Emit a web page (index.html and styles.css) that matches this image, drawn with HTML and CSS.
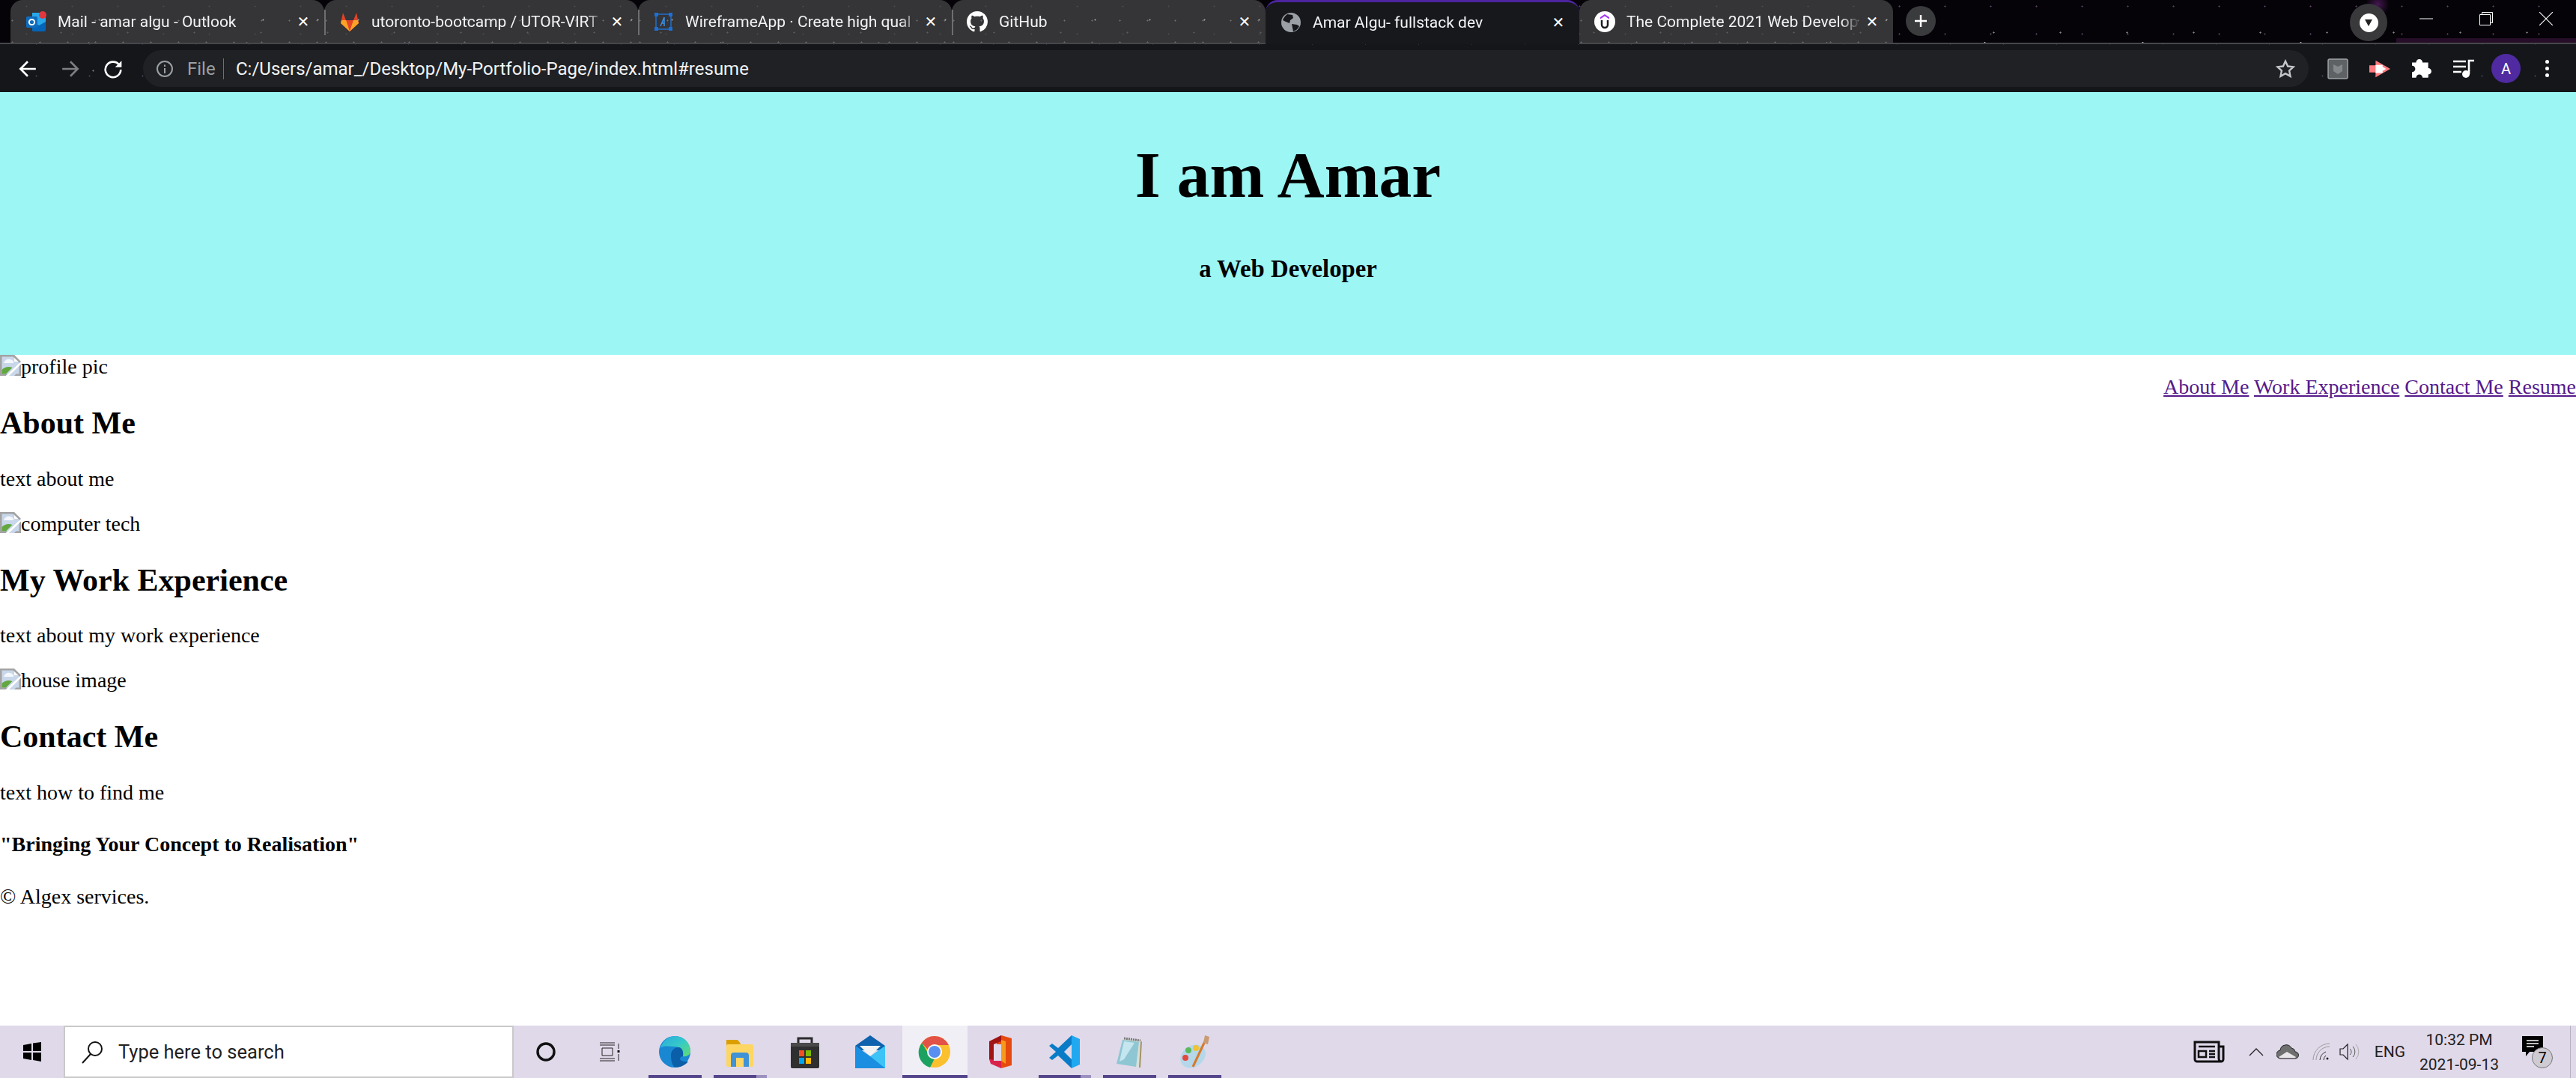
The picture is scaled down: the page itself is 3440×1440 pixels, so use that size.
FILE: index.html
```html
<!DOCTYPE html>
<html lang="en">
<head>
    <meta charset="UTF-8">
    <title>Amar Algu- fullstack dev</title>
    <link rel="stylesheet" href="styles.css">
</head>
<body>
    <svg class="defs">
        <symbol id="broken-img" viewBox="0 0 28 28">
            <path fill="#c9d7ea" d="M0 0h19l9 9v19H0z"/>
            <path fill="#fff" d="M19 0v9h9z"/>
            <path fill="#a3a3a3" d="M0 0h19v2.500H2.500V25.500H10L7.500 28H0zM19 0l9 9v19h-9l2.500-2.500h4V10l-8-7.500z"/>
            <path fill="#f4f7fc" d="M5 11c1-4 5-6 8-5 3 0 6 3 5 5H5z"/>
            <path fill="#62a83f" d="M2.500 25.500V20c4-4 9-5 14-3l-8.500 8.500z"/>
            <path fill="#fff" d="M8 28L28 9v3.500L12 28z"/>
        </symbol>
    </svg>
    <div class="window">
        <!-- browser frame -->
        <div class="browser">
            <div class="tabstrip">
                <div class="tab">
                    <svg class="favicon" viewBox="0 0 28 28"><path fill="#28a8ea" d="M9 2h14l4 4v18l-4 2H9z"/><path fill="#0364b8" d="M9 14l9 5 9-5v11a2 2 0 0 1-2 2H11a2 2 0 0 1-2-2z"/><rect x="1" y="7" width="15" height="15" rx="1.500" fill="#0f6cbd"/><circle cx="8.500" cy="14.500" r="3.600" fill="none" stroke="#fff" stroke-width="2"/><circle cx="23" cy="5" r="5" fill="#e0383e"/></svg>
                    <span class="tab-title">Mail - amar algu - Outlook</span>
                    <span class="tab-close">✕</span>
                </div>
                <div class="tab tab-sep">
                    <svg class="favicon" viewBox="0 0 28 28"><path fill="#e24329" d="M14 27L2 16 5 2l4 10h10l4-10 3 14z"/><path fill="#fc6d26" d="M14 27L9 12H3zM14 27l5-15h6z"/><path fill="#fca326" d="M2 16l1-4h6l5 15zM26 16l-1-4h-6l-5 15z"/></svg>
                    <span class="tab-title">utoronto-bootcamp / UTOR-VIRT</span>
                    <span class="tab-close">✕</span>
                </div>
                <div class="tab tab-sep">
                    <svg class="favicon" viewBox="0 0 28 28"><rect x="4" y="4" width="20" height="20" fill="none" stroke="#1f6fd0" stroke-width="1.500"/><g fill="#1f6fd0"><rect x="2" y="2" width="5" height="5"/><rect x="21" y="2" width="5" height="5"/><rect x="2" y="21" width="5" height="5"/><rect x="21" y="21" width="5" height="5"/></g><path fill="none" stroke="#3b8ee8" stroke-width="1.500" d="M10 20l5-12v12M11.500 16h3.500"/></svg>
                    <span class="tab-title">WireframeApp · Create high qual</span>
                    <span class="tab-close">✕</span>
                </div>
                <div class="tab tab-sep">
                    <svg class="favicon" viewBox="0 0 16 16"><path fill="#fff" d="M8 0C3.580 0 0 3.580 0 8c0 3.540 2.290 6.530 5.470 7.590.4.070.55-.17.55-.38 0-.19-.01-.82-.01-1.490-2.010.37-2.530-.49-2.690-.94-.09-.23-.48-.94-.82-1.130-.28-.15-.68-.52-.01-.53.63-.01 1.080.58 1.230.82.72 1.210 1.870.87 2.330.66.07-.52.28-.87.51-1.070-1.780-.2-3.640-.89-3.640-3.950 0-.87.31-1.590.82-2.150-.08-.2-.36-1.020.08-2.120 0 0 .67-.21 2.200.82.64-.18 1.320-.27 2-.27s1.360.09 2 .27c1.530-1.040 2.200-.82 2.200-.82.44 1.100.16 1.920.08 2.120.51.560.82 1.270.82 2.150 0 3.070-1.870 3.750-3.650 3.950.29.25.54.73.54 1.480 0 1.070-.01 1.930-.01 2.200 0 .21.15.46.55.38A8.010 8.010 0 0 0 16 8c0-4.420-3.580-8-8-8z"/></svg>
                    <span class="tab-title">GitHub</span>
                    <span class="tab-close">✕</span>
                </div>
                <div class="tab tab-active">
                    <svg class="favicon" viewBox="0 0 28 28"><circle cx="14" cy="14" r="13" fill="#9aa0a6"/><path fill="#17181c" d="M9 3l7 1 1 4-4 3-1 4-5-2-4-2C4 8 6 5 9 3zM15 16l7 1 3 2c-2 4-5 6-8 7l-1-5z"/></svg>
                    <span class="tab-title">Amar Algu- fullstack dev</span>
                    <span class="tab-close">✕</span>
                </div>
                <div class="tab">
                    <svg class="favicon" viewBox="0 0 28 28"><circle cx="14" cy="14" r="14" fill="#fff"/><path fill="#a435f0" d="M14 4l6 4v2.500l-6-4-6 4V8z"/><path fill="none" stroke="#1c1d1f" stroke-width="2.500" d="M10 12v6a4 4 0 0 0 8 0v-6"/></svg>
                    <span class="tab-title">The Complete 2021 Web Develop</span>
                    <span class="tab-close">✕</span>
                </div>
                <div class="newtab">
                    <svg viewBox="0 0 20 20" width="20" height="20"><path d="M10 2v16M2 10h16" stroke="#fff" stroke-width="2.400"/></svg>
                </div>
                <div class="tabstrip-space"></div>
                <div class="tabsearch"><span class="tabsearch-dot"><span class="tabsearch-arrow"></span></span></div>
                <div class="winbtn">
                    <svg viewBox="0 0 18 18" width="18" height="18"><path d="M0 9h18" stroke="#fff" stroke-width="1"/></svg>
                </div>
                <div class="winbtn">
                    <svg viewBox="0 0 18 18" width="18" height="18"><path fill="none" stroke="#fff" d="M.5 3.500h14v14H.5zM3.500 3.500v-3h14v14h-3"/></svg>
                </div>
                <div class="winbtn">
                    <svg viewBox="0 0 18 18" width="18" height="18"><path d="M0 0l18 18M18 0L0 18" stroke="#fff" stroke-width="1.100"/></svg>
                </div>
            </div>

            <div class="toolbar">
                <svg class="tool-nav" viewBox="0 0 24 24"><path fill="none" stroke="#fff" stroke-width="2.400" d="M22 12H4M12 3l-9 9 9 9"/></svg>
                <svg class="tool-nav" viewBox="0 0 24 24"><path fill="none" stroke="#7c7f83" stroke-width="2.400" d="M2 12h18M12 3l9 9-9 9"/></svg>
                <svg class="tool-nav" viewBox="0 0 24 24"><path fill="none" stroke="#fff" stroke-width="2.400" d="M19.500 7A9.500 9.500 0 1 0 21.500 13"/><path fill="#fff" d="M22.500 2v8h-8z"/></svg>
                <div class="omnibox">
                    <svg class="omni-info" viewBox="0 0 24 24"><circle cx="12" cy="12" r="10" fill="none" stroke="#9aa0a6" stroke-width="2"/><path d="M12 11v7M12 6.500v2.500" stroke="#9aa0a6" stroke-width="2"/></svg>
                    <span class="omni-file">File</span>
                    <span class="omni-sep"></span>
                    <span class="omni-url">C:/Users/amar_/Desktop/My-Portfolio-Page/index.html#resume</span>
                    <svg class="omni-star" viewBox="0 0 24 24"><path fill="none" stroke="#c4c7c9" stroke-width="2.200" d="M12 2.500l2.900 6.300 6.800.8-5 4.700 1.300 6.800-6-3.400-6 3.400 1.300-6.800-5-4.700 6.800-.8z"/></svg>
                </div>
                <div class="tool-icons">
                    <svg class="tool-icon" viewBox="0 0 28 28"><rect x="1" y="1" width="26" height="26" rx="2" fill="#5f6265" stroke="#a0a3a6" stroke-width="1.500"/><path fill="#85888b" d="M8 8l6 3 6-3v9l-6 4-6-4z"/></svg>
                    <svg class="tool-icon" viewBox="0 0 30 24"><path fill="#ff7b80" d="M0 7h9V0l21 12-21 12v-7H0z"/><path fill="#fff" d="M9 6.500h10V18H9zM19 9l5 3-5 3z"/></svg>
                    <svg class="tool-icon" viewBox="0 0 26 26"><path fill="#fff" d="M10 1a4 4 0 0 1 4 4h7v7a4 4 0 0 1 0 8v4h-7a4 4 0 0 0-8 0H1v-7a4 4 0 0 0 0-8V5h5a4 4 0 0 1 4-4z"/></svg>
                    <svg class="tool-icon" viewBox="0 0 28 26"><path d="M0 3h17M0 10h17M0 17h11" stroke="#fff" stroke-width="2.400"/><path fill="none" stroke="#fff" stroke-width="2.600" d="M21 20V2h7"/><circle cx="17" cy="20" r="5" fill="#fff"/></svg>
                    <span class="avatar">A</span>
                    <span class="menu-dots"><i></i><i></i><i></i></span>
                </div>
            </div>
        </div>

        <!-- portfolio page -->
        <div class="page">
            <header class="hero">
                <h1>I am Amar</h1>
                <h3>a Web Developer</h3>
            </header>

            <nav class="site-nav">
                <a href="#about">About Me</a>
                <a href="#work">Work Experience</a>
                <a href="#contact">Contact Me</a>
                <a href="#resume">Resume</a>
            </nav>

            <section id="about">
                <div class="broken">
                    <svg class="broken-icon"><use href="#broken-img"/></svg>profile pic
                </div>
                <h2>About Me</h2>
                <p>text about me</p>
            </section>
            <section id="work">
                <div class="broken">
                    <svg class="broken-icon"><use href="#broken-img"/></svg>computer tech
                </div>
                <h2>My Work Experience</h2>
                <p>text about my work experience</p>
            </section>
            <section id="contact">
                <div class="broken">
                    <svg class="broken-icon"><use href="#broken-img"/></svg>house image
                </div>
                <h2>Contact Me</h2>
                <p>text how to find me</p>
            </section>
            <footer>
                <h4>"Bringing Your Concept to Realisation"</h4>
                <p>© Algex services.</p>
            </footer>
        </div>

        <!-- windows taskbar -->
        <div class="taskbar">
            <div class="start">
                <svg viewBox="0 0 24 26" width="24" height="26"><path fill="#000" d="M0 4l11-2v10H0zM13 1.500L24 0v12H13zM0 14h11v10L0 22zM13 14h11v12l-11-2z"/></svg>
            </div>
            <div class="search">
                <svg viewBox="0 0 32 32" width="32" height="32"><circle cx="20" cy="12" r="9" fill="none" stroke="#111" stroke-width="2"/><path d="M14 19L3 31" stroke="#111" stroke-width="2"/></svg>
                <span>Type here to search</span>
            </div>
            <div class="task-btn">
                <svg viewBox="0 0 30 30" width="30" height="30"><circle cx="15" cy="15" r="11" fill="none" stroke="#111" stroke-width="3.400"/></svg>
            </div>
            <div class="task-btn">
                <svg viewBox="0 0 30 30" width="30" height="30"><path fill="none" stroke="#222" d="M2 3h20M2 6h20M5 10h14v10H5zM2 24h20M2 27h20M27 4v7M27 18v9"/><rect x="25.500" y="13" width="3" height="3" fill="#111"/></svg>
            </div>

            <div class="task-apps">
                <div class="app app-on">
                    <svg viewBox="0 0 44 44" width="44" height="44"><defs><linearGradient id="edge-top" x1="0" y1="0" x2="1" y2="1"><stop offset="0" stop-color="#2aa9e0"/><stop offset=".5" stop-color="#35c9c9"/><stop offset="1" stop-color="#62dd70"/></linearGradient></defs><circle cx="22" cy="22" r="21" fill="#1a87d2"/><path fill="url(#edge-top)" d="M3 17C6 7 14 1 23 1c11 0 20 9 20 20 0 5-5 8-10 7 1-8-4-13-11-13-7 0-15-2-19 2z"/><path fill="#0b5ea8" d="M17 27c0-7 5-11 10-11 5 0 7 6 6 12-6 1-6 8 7 7-5 6-13 9-19 7-3-4-4-9-4-15z"/></svg>
                </div>
                <div class="app app-on app-multi">
                    <svg viewBox="0 0 44 44" width="44" height="44"><path fill="#dba000" d="M4 6h15l4 5-4 5H4z"/><rect x="4" y="12" width="36" height="30" rx="2" fill="#fdd663"/><path fill="#3f93d6" d="M10 42V27a4 4 0 0 1 4-4h16a4 4 0 0 1 4 4v15h-7V30H17v12z"/></svg>
                </div>
                <div class="app">
                    <svg viewBox="0 0 44 44" width="44" height="44"><path fill="none" stroke="#2b2b2b" stroke-width="3" d="M13 12V4h18v8"/><rect x="3" y="10" width="38" height="34" rx="2" fill="#2f2f2f"/><rect x="3" y="10" width="38" height="5" fill="#4a4a4a"/><rect x="14" y="20" width="7" height="8" fill="#f25022"/><rect x="23" y="20" width="7" height="8" fill="#7fba00"/><rect x="14" y="30" width="7" height="8" fill="#00a4ef"/><rect x="23" y="30" width="7" height="8" fill="#ffb900"/></svg>
                </div>
                <div class="app">
                    <svg viewBox="0 0 44 44" width="44" height="44"><path fill="#0f62ad" d="M2 14L22 0l20 14v6H2z"/><path fill="#f3f3f3" d="M8 14h28L22 28z"/><path fill="#3dc3f5" d="M2 14l20 14 20-14v30H2z"/><path fill="#1a8ee0" d="M2 14l20 14 20 16H2z"/></svg>
                </div>
                <div class="app app-on app-active">
                    <svg viewBox="0 0 44 44" width="44" height="44"><circle cx="22" cy="22" r="21" fill="#fbc02d"/><path fill="#e35247" d="M22 1a21 21 0 0 1 19 12H22a9 9 0 0 0-9 6L5 10A21 21 0 0 1 22 1z"/><path fill="#1ba261" d="M5 10l9 15a9 9 0 0 0 8 6l-6 12A21 21 0 0 1 5 10z"/><circle cx="22" cy="22" r="10" fill="#fff"/><circle cx="22" cy="22" r="8" fill="#5a8ff2"/></svg>
                </div>
                <div class="app">
                    <svg viewBox="0 0 44 44" width="44" height="44"><path fill="#e64a0f" d="M24 0l14 4v36l-14 4 -6-6V6z"/><path fill="#a01414" d="M24 0L8 8v24l6 2V12l10-4z"/><path fill="#d9224a" d="M8 32l16 2v10L10 38z"/><path fill="#e0d9ea" d="M14 12h10v22H14z"/><path fill="#f59a1b" d="M24 6l6 2v30l-6-4z"/></svg>
                </div>
                <div class="app app-on app-multi">
                    <svg viewBox="0 0 44 44" width="44" height="44"><path fill="#20a8f0" d="M31 0l11 5v34l-11 5z"/><path fill="#0a7cc7" d="M31 0v44L13 27l-8 6-4-3 9-8-9-8 4-3 8 6zM31 12l-10 10 10 10z"/><path fill="#e0d9ea" d="M31 13l-10 9 10 9z" opacity=".25"/></svg>
                </div>
                <div class="app app-on">
                    <svg viewBox="0 0 44 44" width="44" height="44"><path fill="#d8dfd8" d="M14 4l24 3-2 36-26-4z"/><path fill="#8fc6d4" d="M12 6l22 3-4 33L4 38z"/><path fill="#c5e6ef" d="M14 8l14 2-14 22-6 3z"/><path d="M14 4l22 3" stroke="#777" stroke-width="3" stroke-dasharray="2 1"/><path fill="#a39265" d="M36 9l2-1-2 35-2 0z"/></svg>
                </div>
                <div class="app app-on">
                    <svg viewBox="0 0 44 44" width="44" height="44"><ellipse cx="20" cy="28" rx="18" ry="14" fill="#b5d7ea" transform="rotate(-35 20 28)"/><circle cx="10" cy="30" r="4" fill="#e2483d"/><circle cx="14" cy="20" r="4" fill="#5cb85c"/><circle cx="24" cy="17" r="4" fill="#f1c232"/><path d="M20 42L36 8" stroke="#d8792a" stroke-width="3"/><path fill="#c99b73" d="M34 10l2-10 6 2-2 10z"/></svg>
                </div>
            </div>

            <div class="tray">
                <svg class="tray-news" viewBox="0 0 42 30" width="42" height="30"><path fill="none" stroke="#111" stroke-width="3" d="M2 2h32v22a4 4 0 0 0 4 4H5a3 3 0 0 1-3-3zM34 8h6v17a3 3 0 0 1-3 3"/><path fill="none" stroke="#111" stroke-width="2.500" d="M7 8h22M7 14h10v8H7zM21 14h8M21 18h8M21 22h8"/></svg>
                <svg class="tray-up" viewBox="0 0 20 12" width="20" height="12"><path fill="none" stroke="#222" stroke-width="1.300" d="M1 11l9-9 9 9"/></svg>
                <svg class="tray-cloud" viewBox="0 0 30 20" width="30" height="20"><path fill="#6f6f6f" d="M6 19a5.500 5.500 0 0 1-1-11 8 8 0 0 1 15-3 6 6 0 0 1 5 5 4.500 4.500 0 0 1 0 9z"/><path fill="#e8e6e8" d="M3 17l11-7 12 7a3 3 0 0 1-2 1.500H6a4 4 0 0 1-3-1.500z"/><path fill="none" stroke="#222" d="M6 19a5.500 5.500 0 0 1-1-11 8 8 0 0 1 15-3 6 6 0 0 1 5 5 4.500 4.500 0 0 1 0 9z"/></svg>
                <svg class="tray-wifi" viewBox="0 0 24 24" width="24" height="24"><g fill="none" stroke="#999"><path d="M1 23A22 22 0 0 1 23 1M5 23A18 18 0 0 1 23 5"/><path stroke="#333" d="M10 23A13 13 0 0 1 18 12M15 23a8 8 0 0 1 3-6"/></g><circle cx="20" cy="21" r="1.500" fill="#222"/></svg>
                <svg class="tray-vol" viewBox="0 0 28 24" width="28" height="24"><path fill="none" stroke="#222" stroke-width="1.200" d="M1 8h4l6-6v20l-6-6H1z"/><path fill="none" stroke="#555" d="M14 8a5 5 0 0 1 0 8M18 5a10 10 0 0 1 0 14"/><path fill="none" stroke="#aaa" d="M22 2a15 15 0 0 1 0 20"/></svg>
                <span class="tray-lang">ENG</span>
                <div class="tray-clock">
                    <span>10:32 PM</span>
                    <span>2021-09-13</span>
                </div>
                <div class="tray-notify">
                    <svg viewBox="0 0 28 28" width="28" height="28"><path fill="#000" d="M0 0h28v21H10l-5 6v-6H0z"/><path d="M6 6h16M6 10h16M6 14h10" stroke="#fff" stroke-width="1.500"/></svg>
                    <span class="notify-badge">7</span>
                </div>
            </div>
        </div>
    </div>
</body>
</html>
```

FILE: styles.css
```css
html {
    font-size: 28px;
}

body {
    margin: 0;
    background: #fff;
    color: #000;
    font-family: "Liberation Serif", serif;
}

.window {
    width: 3440px;
    height: 1440px;
    display: flex;
    flex-direction: column;
    overflow: hidden;
}

.defs {
    display: none;
}

/* browser frame */
.browser {
    height: 123px;
    flex-shrink: 0;
    color: #fff;
    font-family: "Roboto", "Liberation Sans", sans-serif;
    background-color: #050308;
    background-image:
        radial-gradient(circle, #d8d8e8 0 1px, transparent 1.6px),
        radial-gradient(circle, #6f7fd0 0 1px, transparent 1.6px),
        radial-gradient(circle, #8a8a8a 0 .8px, transparent 1.4px),
        radial-gradient(circle, #55405f 0 .8px, transparent 1.4px);
    background-size: 211px 97px, 157px 71px, 89px 53px, 61px 37px;
    background-position: 13px 9px, 71px 31px, 37px 17px, 5px 27px;
}

.tabstrip {
    height: 59px;
    display: flex;
    align-items: stretch;
    padding-left: 14px;
    box-sizing: border-box;
    border-bottom: 2px solid #46474a;
    background:
        radial-gradient(circle, rgba(120, 40, 140, .55), transparent 16px) no-repeat 3175px 6px / 32px 32px,
        linear-gradient(#260d28, #260d28) no-repeat right 0 bottom 0 / 240px 6px;
    background-position: 3159px -10px, right bottom;
}

.tab {
    width: 419px;
    flex-shrink: 0;
    box-sizing: border-box;
    padding: 0 19px 0 20px;
    display: flex;
    align-items: center;
    position: relative;
    border-radius: 16px 16px 0 0;
    background-color: rgba(72, 72, 72, .72);
    background-image:
        radial-gradient(circle, #9a9a9a 0 .8px, transparent 1.4px),
        radial-gradient(circle, #6a6a6a 0 .8px, transparent 1.4px);
    background-size: 73px 41px, 37px 29px;
    background-position: 9px 6px, 21px 13px;
    font-size: 21px;
}

.tab-sep::before {
    content: "";
    position: absolute;
    left: 0;
    top: 13px;
    height: 34px;
    width: 2px;
    background: #6d6e70;
}

.tab-active {
    background: #17181c;
    border-top: 3px solid #4d24a0;
    border-bottom: 2px solid #17181c;
    margin-bottom: -2px;
}

.favicon {
    width: 28px;
    height: 28px;
    flex-shrink: 0;
}

.tab-title {
    margin-left: 15px;
    width: 312px;
    white-space: nowrap;
    overflow: hidden;
    color: #f1f3f4;
    -webkit-mask-image: linear-gradient(90deg, #000 92%, transparent 100%);
    mask-image: linear-gradient(90deg, #000 92%, transparent 100%);
}

.tab-close {
    margin-left: auto;
    font-size: 20px;
    font-family: "DejaVu Sans", sans-serif;
    font-weight: bold;
    width: 18px;
    text-align: center;
}

.newtab {
    width: 40px;
    height: 40px;
    margin: 8px 0 0 17px;
    border-radius: 50%;
    background: #3a3b3d;
    display: flex;
    align-items: center;
    justify-content: center;
}

.tabstrip-space {
    flex: 1;
}

.tabsearch {
    width: 50px;
    height: 50px;
    margin: 5px 12px 0 0;
    border-radius: 50%;
    background: #39393b;
    display: flex;
    align-items: center;
    justify-content: center;
}

.tabsearch-dot {
    width: 25px;
    height: 25px;
    border-radius: 50%;
    background: #fff;
    display: flex;
    align-items: center;
    justify-content: center;
}

.tabsearch-arrow {
    border-style: solid;
    border-width: 9px 5px 0;
    border-color: #222 transparent transparent;
}

.winbtn {
    width: 80px;
    height: 50px;
    display: flex;
    align-items: center;
    justify-content: center;
}

.toolbar {
    height: 64px;
    display: flex;
    align-items: center;
    padding: 8px 0 7px 24px;
    box-sizing: border-box;
    background-color: #14161a;
    background-image:
        radial-gradient(circle, #777b80 0 .8px, transparent 1.4px),
        radial-gradient(circle, #3c4250 0 .8px, transparent 1.4px);
    background-size: 167px 61px, 71px 43px;
    background-position: 41px 5px, 13px 21px;
}

.tool-nav {
    width: 26px;
    height: 26px;
    flex-shrink: 0;
    margin-right: 31px;
}

.omnibox {
    width: 2892px;
    height: 49px;
    margin-left: -4px;
    padding-left: 17px;
    box-sizing: border-box;
    border-radius: 25px;
    background: #202124;
    display: flex;
    align-items: center;
    flex-shrink: 0;
    font-size: 24px;
}

.omni-info {
    width: 24px;
    height: 24px;
}

.omni-file {
    margin-left: 18px;
    width: 35px;
    color: #9aa0a6;
    white-space: nowrap;
}

.omni-sep {
    width: 1px;
    height: 28px;
    margin: 0 16px 0 13px;
    background: #6c6f73;
}

.omni-url {
    color: #f1f3f4;
}

.omni-star {
    width: 26px;
    height: 26px;
    margin-left: auto;
    margin-right: 18px;
}

.tool-icons {
    flex: 1;
    display: flex;
    align-items: center;
    padding-left: 25px;
}

.tool-icon {
    width: 28px;
    height: 28px;
    margin-right: 28px;
}

.avatar {
    width: 39px;
    height: 39px;
    margin-left: -5px;
    border-radius: 50%;
    background: #4f2aa0;
    font-size: 20px;
    display: flex;
    align-items: center;
    justify-content: center;
}

.menu-dots {
    margin-left: 33px;
    display: flex;
    flex-direction: column;
    gap: 4px;
}

.menu-dots i {
    width: 5px;
    height: 5px;
    border-radius: 50%;
    background: #fff;
}

/* portfolio page */
.page {
    flex: 1;
    min-height: 0;
    line-height: 32px;
}

.hero {
    height: 351px;
    box-sizing: border-box;
    padding-top: 62px;
    background: #9cf6f4;
    text-align: center;
}

.hero h1 {
    margin: 0 0 57px;
    font-size: 87.500px;
    line-height: 98px;
}

.hero h3 {
    margin: 0;
    font-size: 32.760px;
    line-height: 38px;
}

.site-nav {
    float: right;
    margin-top: 27px;
}

.site-nav a {
    color: #551a8b;
}

.broken-icon {
    width: 28px;
    height: 28px;
    vertical-align: -3px;
}

h2 {
    margin: .83em 0;
    font-size: 42px;
    line-height: 48px;
}

p {
    margin: 1em 0;
}

h4 {
    margin: 1.33em 0;
    font-size: 28px;
}

/* windows taskbar */
.taskbar {
    height: 70px;
    flex-shrink: 0;
    display: flex;
    align-items: center;
    background: #e0d9ea;
    font-family: "Roboto", "Liberation Sans", sans-serif;
    color: #222;
}

.start {
    width: 85px;
    height: 100%;
    display: flex;
    align-items: center;
    justify-content: center;
}

.search {
    width: 601px;
    height: 100%;
    box-sizing: border-box;
    border: 2px solid #c9c9c9;
    background: #fff;
    padding-left: 20px;
    display: flex;
    align-items: center;
    font-size: 25.500px;
}

.search span {
    margin-left: 19px;
}

.task-btn {
    width: 85px;
    height: 100%;
    display: flex;
    align-items: center;
    justify-content: center;
}

.task-apps {
    margin-left: 2px;
    height: 100%;
    display: flex;
}

.app {
    width: 86.750px;
    height: 100%;
    box-sizing: border-box;
    display: flex;
    align-items: center;
    justify-content: center;
    position: relative;
}

.app-on::after {
    content: "";
    position: absolute;
    left: 8px;
    right: 8px;
    bottom: 0;
    height: 4px;
    background: #54448a;
}

.app-multi::after {
    background: linear-gradient(90deg, #54448a 80%, #9c90c0 80%);
}

.app-active {
    background: #f1eff6;
}

.app-active::after {
    left: 0;
    right: 0;
}

.tray {
    margin-left: auto;
    margin-right: 7px;
    height: 100%;
    display: flex;
    align-items: center;
    border-right: 1px solid #b6b0c0;
}

.tray-news {
    margin-right: 32px;
}

.tray-up {
    margin-right: 17px;
}

.tray-cloud {
    margin-right: 18px;
}

.tray-wifi {
    margin-right: 12px;
}

.tray-vol {
    margin-right: 19px;
}

.tray-lang {
    font-size: 21px;
    margin-right: 17px;
}

.tray-clock {
    width: 110px;
    display: flex;
    flex-direction: column;
    align-items: center;
    gap: 7px;
    font-size: 21px;
    line-height: 26px;
}

.tray-notify {
    position: relative;
    margin: 0 23px 0 29px;
    width: 41px;
    height: 42px;
}

.notify-badge {
    position: absolute;
    left: 13px;
    top: 15px;
    width: 26px;
    height: 26px;
    border: 1px solid #777;
    border-radius: 50%;
    background: #cfcbd3;
    color: #000;
    font-size: 20px;
    line-height: 26px;
    text-align: center;
}
```
